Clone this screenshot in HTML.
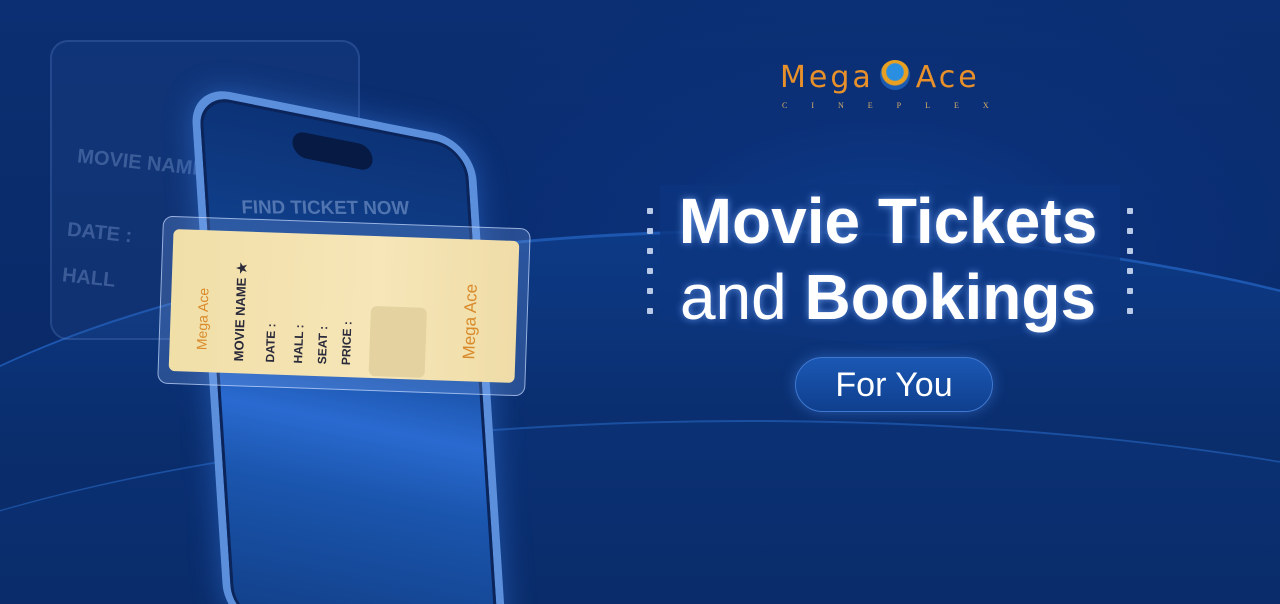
<!DOCTYPE html>
<html><head><meta charset="utf-8"><style>
*{margin:0;padding:0;box-sizing:border-box}
html,body{width:1280px;height:604px;overflow:hidden;background:#0a2a66}
body{font-family:"Liberation Sans",sans-serif}
#w{position:relative;width:1280px;height:604px;overflow:hidden}
.bg{position:absolute;inset:0;background:radial-gradient(ellipse 520px 320px at 880px 260px,#0f3f8f 0%,#0b3078 45%,rgba(8,36,90,0) 100%),linear-gradient(180deg,#0b2f72 0%,#0a2a68 60%,#082458 100%)}
.band{position:absolute;left:-200px;top:230px;width:1900px;height:700px;border-radius:50%;border-top:3px solid #1d57b0;background:linear-gradient(180deg,#0d3a86 0%,#0a2d6c 30%,#082456 100%)}
.band2{position:absolute;left:-300px;top:420px;width:2100px;height:600px;border-radius:50%;border-top:2px solid #1b4fa0;background:linear-gradient(180deg,#0b3175,#072050)}
.ghost{position:absolute;left:50px;top:40px;width:310px;height:300px;border:2px solid rgba(120,160,230,.2);border-radius:18px;background:rgba(40,80,150,.2)}
.ghost span{position:absolute;color:rgba(160,190,240,.3);font-weight:bold;font-size:20px;transform:rotate(6deg)}
.phone{position:absolute;left:190px;top:84px;width:284px;height:540px;border-radius:40px;transform:matrix(1,0.2,0.065,1,0,0);transform-origin:top left;border:8px solid #5b8fdc;background:linear-gradient(180deg,#0c3276 0%,#124796 40%,#2a6ad0 58%,#1a55ad 72%,#123f88 100%);box-shadow:0 0 30px rgba(60,130,240,.45)}
.phone:before{content:"";position:absolute;inset:0;border-radius:32px;border:3px solid #0b245a}
.notch{position:absolute;left:92px;top:18px;width:80px;height:26px;border-radius:14px;background:#071a44}
.find{position:absolute;left:36px;top:80px;color:rgba(180,205,245,.4);font-weight:bold;font-size:19px;white-space:nowrap;transform:skewY(-11deg)}
.tk{position:absolute;left:160px;top:222px;width:368px;height:168px;border:1.5px solid rgba(200,220,255,.7);border-radius:10px;background:rgba(130,170,240,.25);transform:rotate(2deg)}
.ticket{position:absolute;left:10px;top:12px;width:346px;height:142px;border-radius:6px;background:linear-gradient(90deg,#f1dfa8,#f6e6b8 60%,#efdca7)}
.ticket .v{position:absolute;transform:rotate(-90deg);transform-origin:left top;color:#2a2a3a;font-weight:bold;font-size:12px;white-space:nowrap}
.logo{position:absolute;left:780px;top:60px;font-size:30px;color:#e8902a;letter-spacing:3px;font-family:"DejaVu Sans",sans-serif;white-space:nowrap}
.globe{display:inline-block;width:30px;height:30px;border-radius:50%;background:radial-gradient(circle at 50% 40%,#2a8fe0 35%,#e9a020 40%,#e9a020 55%,#1b5ab0 60%);vertical-align:-3px;margin:0 6px}
.cin{position:absolute;left:782px;top:101px;font-size:8px;color:#d9b066;letter-spacing:24px;font-family:"Liberation Serif",serif;white-space:nowrap}
.panel{position:absolute;left:660px;top:185px;width:460px;height:165px;background:#0c3680;clip-path:polygon(0 0,100% 0,100% 82%,55% 100%,0 82%);opacity:.8}
.t1,.t2{position:absolute;width:520px;left:628px;text-align:center;color:#fff;font-size:64px;text-shadow:0 0 8px rgba(120,170,255,.8);white-space:nowrap}
.t1{top:184px;font-weight:bold}
.t2{top:260px}
.dots{position:absolute;top:208px;width:6px}
.dots i{display:block;width:6px;height:6px;margin-bottom:14px;background:#b9c9e8;border-radius:1px}
.pill{position:absolute;left:795px;top:357px;width:198px;height:55px;border-radius:28px;background:linear-gradient(180deg,#1b58b4,#0f3f8e);border:1px solid #3f78d0;color:#fff;font-size:34px;text-align:center;line-height:55px;box-shadow:0 0 14px rgba(80,150,255,.4)}
</style></head><body><div id="w">
<div class="bg"></div>
<div class="band"></div>
<div class="band2"></div>
<div class="ghost"><span style="left:25px;top:110px">MOVIE NAME</span><span style="left:15px;top:180px">DATE :</span><span style="left:10px;top:225px">HALL</span></div>
<div class="phone"><div class="notch"></div><div class="find">FIND TICKET NOW</div></div>
<div class="tk"><div class="ticket">
<div class="v" style="left:24px;top:120px;color:#d98a2a;font-size:14px;font-weight:normal">Mega Ace</div>
<div class="v" style="left:62px;top:130px;font-size:13px">MOVIE NAME ★</div>
<div class="v" style="left:94px;top:130px">DATE :</div>
<div class="v" style="left:122px;top:130px">HALL :</div>
<div class="v" style="left:146px;top:130px">SEAT :</div>
<div class="v" style="left:170px;top:130px">PRICE :</div>
<div style="position:absolute;left:200px;top:70px;width:56px;height:70px;background:#e4d3a0;border-radius:6px"></div>
<div class="v" style="left:290px;top:120px;color:#d98a2a;font-size:17px;font-weight:normal">Mega Ace</div>
</div></div>
<div class="logo">Mega<span class="globe"></span>Ace</div>
<div class="cin">CINEPLEX</div>
<div class="panel"></div>
<div class="dots" style="left:647px"><i></i><i></i><i></i><i></i><i></i><i></i></div>
<div class="dots" style="left:1127px"><i></i><i></i><i></i><i></i><i></i><i></i></div>
<div class="t1">Movie Tickets</div>
<div class="t2">and <b>Bookings</b></div>
<div class="pill">For You</div>
</div></body></html>
